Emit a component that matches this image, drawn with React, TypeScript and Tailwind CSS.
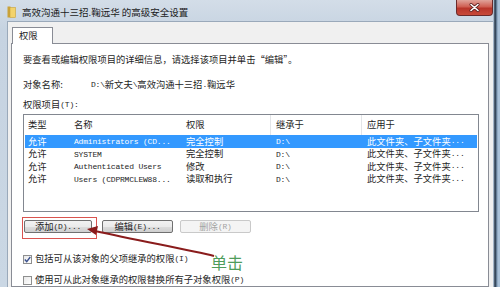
import React from "react";

const cjk = "font-['Noto_Sans_CJK_SC','Noto_Sans_CJK_TC',sans-serif]";

// ASCII parts in the dialog are narrow and monospaced
function M({ children }: { children: React.ReactNode }) {
	return (
		<span className="font-['Liberation_Mono',monospace] text-[8px] leading-none tracking-[-0.2px]">
			{children}
		</span>
	);
}

const rows = [
	{ name: "Administrators (CD...", perm: "完全控制", selected: true },
	{ name: "SYSTEM", perm: "完全控制", selected: false },
	{ name: "Authenticated Users", perm: "修改", selected: false },
	{ name: "Users (CDPRMCLEW88...", perm: "读取和执行", selected: false },
];

function WinButton({
	children,
	width,
	disabled,
}: {
	children: React.ReactNode;
	width: string;
	disabled?: boolean;
}) {
	return (
		<div
			className={`${width} h-[13px] flex items-center justify-center rounded-[2px] border leading-none ${
				disabled
					? "border-[#c9c9c9] bg-[#f4f4f4] text-[#a3a3a3]"
					: "border-[#707070] bg-[linear-gradient(#f2f2f2_0%,#ebebeb_50%,#dddddd_51%,#cfcfcf_100%)] text-[#1e1e1e]"
			}`}
		>
			{children}
		</div>
	);
}

function CheckBox({ checked }: { checked?: boolean }) {
	return (
		<div className="w-[9px] h-[9px] border border-[#8e8f8f] bg-[linear-gradient(135deg,#e9e9e9,#ffffff)] flex items-center justify-center shrink-0">
			{checked && (
				<svg width="7" height="7" viewBox="0 0 7 7">
					<path d="M0.8 3.6 L2.7 5.6 L6.3 1" fill="none" stroke="#3b518f" strokeWidth="1.4" />
				</svg>
			)}
		</div>
	);
}

export default function App() {
	return (
		<div
			className={`relative w-[500px] h-[287px] overflow-hidden flex flex-col text-[9.3px] text-[#1e1e1e] ${cjk} bg-[linear-gradient(to_right,transparent_493px,#7f95ad_494px,#1f2a37_495px,#4d6680_496px,#a9c1d9_498px),linear-gradient(#d3dde8,#c6d3e1_30px,#cad7e4)]`}
		>
			{/* title bar */}
			<div className="h-[21px] shrink-0 flex items-start pl-[7px] pr-[7px]">
				<svg width="9" height="12" viewBox="0 0 9 12" className="mt-[6px]">
					<rect x="0.5" y="0.5" width="3" height="11" fill="#c9a23a" />
					<rect x="3" y="1.5" width="5.5" height="10" fill="#f3d36c" stroke="#c9a23a" strokeWidth="0.6" />
				</svg>
				<div className="ml-[6px] mt-[5px] leading-[14px] text-[9.5px] text-[#1b1b1b]">
					高效沟通十三招.鞠远华 的高级安全设置
				</div>
				<div className="flex-1" />
				<div className="w-[37px] h-[16px] rounded-b-[4px] border border-t-0 border-[#6b2a2a] bg-[linear-gradient(#e0a39a,#cf5e52_45%,#b8352a_55%,#c84a3a)] flex items-center justify-center">
					<svg width="11" height="9" viewBox="0 0 11 9">
						<path d="M2 1.5 L9 7.5 M9 1.5 L2 7.5" stroke="#5a2020" strokeWidth="3" strokeLinecap="round" />
						<path d="M2 1.5 L9 7.5 M9 1.5 L2 7.5" stroke="#ffffff" strokeWidth="1.6" strokeLinecap="round" />
					</svg>
				</div>
			</div>

			{/* dialog body */}
			<div className="flex-1 ml-[7px] mr-[7px] border-l border-t border-[#9aa9ba] bg-[#f0f0f0] pt-[5px] pl-[3px] pr-[4px] flex flex-col">
				<div className="relative z-10 -mb-px ml-[1px] w-[41px] h-[17px] border border-b-0 border-[#898c95] bg-white pl-[6px] flex items-center leading-none">
					权限
				</div>
				<div className="flex-1 border border-[#898c95] bg-white pt-[10px] pl-[11px] pr-[9px]">
					<div className="h-[12px] flex items-center leading-none">
						要查看或编辑权限项目的详细信息，请选择该项目并单击“编辑”。
					</div>
					<div className="mt-[13px] h-[12px] flex items-center leading-none">
						<span className="w-[68px]">对象名称:</span>
						<M>D:\</M>
						<span>新文夫</span>
						<M>\</M>
						<span>高效沟通十三招</span>
						<M>.</M>
						<span>鞠远华</span>
					</div>
					<div className="mt-[8px] h-[12px] flex items-center leading-none">
						<span>权限项目</span>
						<M>(T):</M>
					</div>

					{/* permission list */}
					<div className="mt-[3px] h-[98px] border border-[#828790] bg-white">
						<div className="h-[20px] flex items-center leading-none">
							<div className="w-[45px] pl-[4px] h-full flex items-center">类型</div>
							<div className="w-[112px] pl-[5px] h-full flex items-center">名称</div>
							<div className="w-[90px] pl-[5px] h-full flex items-center border-r border-[#e3e5e8]">权限</div>
							<div className="w-[91px] pl-[5px] h-full flex items-center border-r border-[#e3e5e8]">继承于</div>
							<div className="flex-1 pl-[5px] h-full flex items-center">应用于</div>
						</div>
						{rows.map((r) => (
							<div
								key={r.name}
								className={`mx-[1px] h-[12.5px] flex items-center leading-none whitespace-nowrap ${
									r.selected ? "bg-[#3399ff] text-white" : ""
								}`}
							>
								<div className="w-[44px] pl-[3px]">允许</div>
								<div className="w-[112px] pl-[5px] overflow-hidden">
									<M>{r.name}</M>
								</div>
								<div className="w-[90px] pl-[5px]">{r.perm}</div>
								<div className="w-[91px] pl-[5px]">
									<M>D:\</M>
								</div>
								<div className="flex-1 pl-[5px] flex items-center">
									<span>此文件夹、子文件夹</span>
									<M>...</M>
								</div>
							</div>
						))}
					</div>

					{/* buttons */}
					<div className="relative mt-[8px] flex items-center pl-[1px]">
						<WinButton width="w-[68px]">
							<span>添加</span>
							<M>(D)...</M>
						</WinButton>
						<div className="w-[10px]" />
						<WinButton width="w-[71px]">
							<span>编辑</span>
							<M>(E)...</M>
						</WinButton>
						<div className="w-[7px]" />
						<WinButton width="w-[71px]" disabled>
							<span>删除</span>
							<M>(R)</M>
						</WinButton>
						<div className="absolute left-[-1px] top-[-3px] w-[75px] h-[22px] border border-[#d9534f]" />
					</div>

					{/* checkboxes */}
					<div className="mt-[20px] h-[12px] flex items-center leading-none">
						<CheckBox checked />
						<span className="ml-[3px]">包括可从该对象的父项继承的权限</span>
						<M>(I)</M>
					</div>
					<div className="mt-[9px] h-[12px] flex items-center leading-none">
						<CheckBox />
						<span className="ml-[3px]">使用可从此对象继承的权限替换所有子对象权限</span>
						<M>(P)</M>
					</div>
				</div>
			</div>

			{/* annotation: arrow + 单击 */}
			<svg className="absolute left-0 top-0 pointer-events-none" width="500" height="287" viewBox="0 0 500 287">
				<path d="M214 256 C190 250 140 241 95 231" fill="none" stroke="#8a1c1c" strokeWidth="2" />
				<path d="M87 229 L98 226 L96 235 Z" fill="#8a1c1c" />
			</svg>
			<div className="absolute left-[211px] top-[252px] text-[16px] leading-[20px] text-[#4f9d5b]">
				单击
			</div>
		</div>
	);
}
